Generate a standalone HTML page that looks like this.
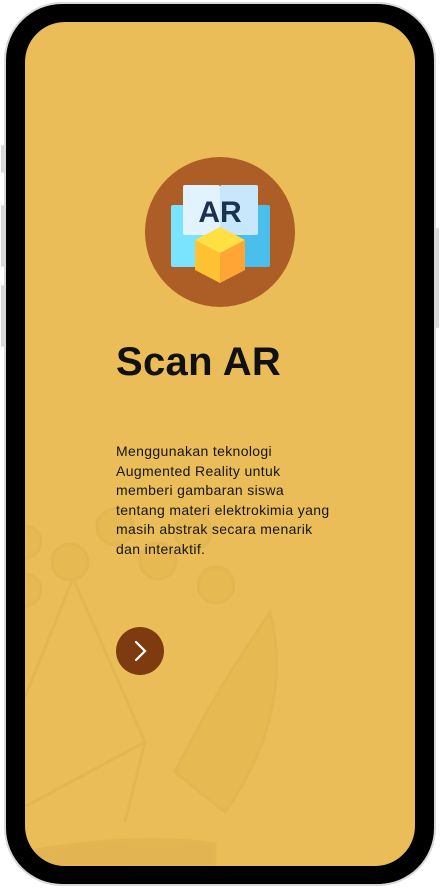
<!DOCTYPE html>
<html><head><meta charset="utf-8"><style>
*{margin:0;padding:0;box-sizing:border-box}
body{width:440px;height:888px;background:#fff;position:relative;overflow:hidden;font-family:"Liberation Sans",sans-serif}
.btn{position:absolute;background:#d8d8d8;border-radius:2px}
.outer{position:absolute;left:4px;top:2px;width:432px;height:884px;border-radius:58px;background:#d9d9d9}
.frame{position:absolute;left:6px;top:4px;width:428px;height:880px;border-radius:56px;background:#000}
.screen{position:absolute;left:25px;top:22px;width:390px;height:844px;border-radius:40px;background:#eabd58;overflow:hidden}
h1{position:absolute;left:91px;top:318px;font-size:40px;font-weight:bold;color:#111;letter-spacing:0.3px}
p{position:absolute;left:91px;top:420px;white-space:nowrap;font-size:14px;letter-spacing:0.35px;line-height:19.5px;color:#151515}
.go{position:absolute;left:91px;top:605px;width:48px;height:48px;border-radius:50%;background:#7e3b10}
</style></head><body>
<div class="btn" style="left:1px;top:145px;width:4px;height:28px"></div>
<div class="btn" style="left:1px;top:205px;width:4px;height:62px"></div>
<div class="btn" style="left:1px;top:285px;width:4px;height:62px"></div>
<div class="btn" style="left:435px;top:228px;width:4px;height:100px"></div>
<div class="outer"></div>
<div class="frame"></div>
<div class="screen">
<svg width="390" height="844" style="position:absolute;left:0;top:0" fill="none" stroke="#dcb04f" stroke-width="3" opacity="0.5">
<g fill="#e6b64e">
<circle cx="45" cy="540" r="18"/><circle cx="90" cy="505" r="18"/><circle cx="0" cy="520" r="16"/><circle cx="0" cy="568" r="16"/><circle cx="133" cy="539" r="18"/><circle cx="168" cy="510" r="18"/><circle cx="191" cy="563" r="18"/>
</g>
<path d="M48 556 L-10 700 M48 556 L120 720 L100 800 M120 720 L-10 790"/>
<path d="M150 750 C200 650 240 600 245 590 C260 650 250 720 200 790 Z" fill="#e6b64e"/>
<path d="M0 830 C80 815 150 815 190 822 L190 844 L0 844Z" fill="#dcae4d"/>
</svg>
<svg style="position:absolute;left:120px;top:135px" width="150" height="150" viewBox="0 0 150 150">
<circle cx="75" cy="75" r="75" fill="#ad5e27"/>
<rect x="26" y="48" width="50" height="62" rx="2" fill="#7ae3fd"/>
<rect x="75" y="48" width="50" height="62" rx="2" fill="#4bbfeb"/>
<rect x="38" y="28" width="37" height="50" rx="2" fill="#e2f2fe"/>
<rect x="75" y="28" width="38" height="50" rx="2" fill="#c8e6fc"/>
<text x="75" y="65" text-anchor="middle" font-family="Liberation Sans" font-weight="bold" font-size="30" fill="#1b3151">AR</text>
<path d="M75 70 L100 83 L75 96 L50 83Z" fill="#ffe042"/>
<path d="M50 83 L75 96 L75 126 L50 113Z" fill="#ffc233"/>
<path d="M100 83 L75 96 L75 126 L100 113Z" fill="#ffa535"/>
</svg>
<h1>Scan AR</h1>
<p>Menggunakan teknologi<br>Augmented Reality untuk<br>memberi gambaran siswa<br>tentang materi elektrokimia yang<br>masih abstrak secara menarik<br>dan interaktif.</p>
<div class="go"><svg width="48" height="48"><path d="M20 15 L29 24 L20 33" stroke="#fff" stroke-width="2.2" fill="none" stroke-linecap="round"/></svg></div>
</div>
</body></html>
